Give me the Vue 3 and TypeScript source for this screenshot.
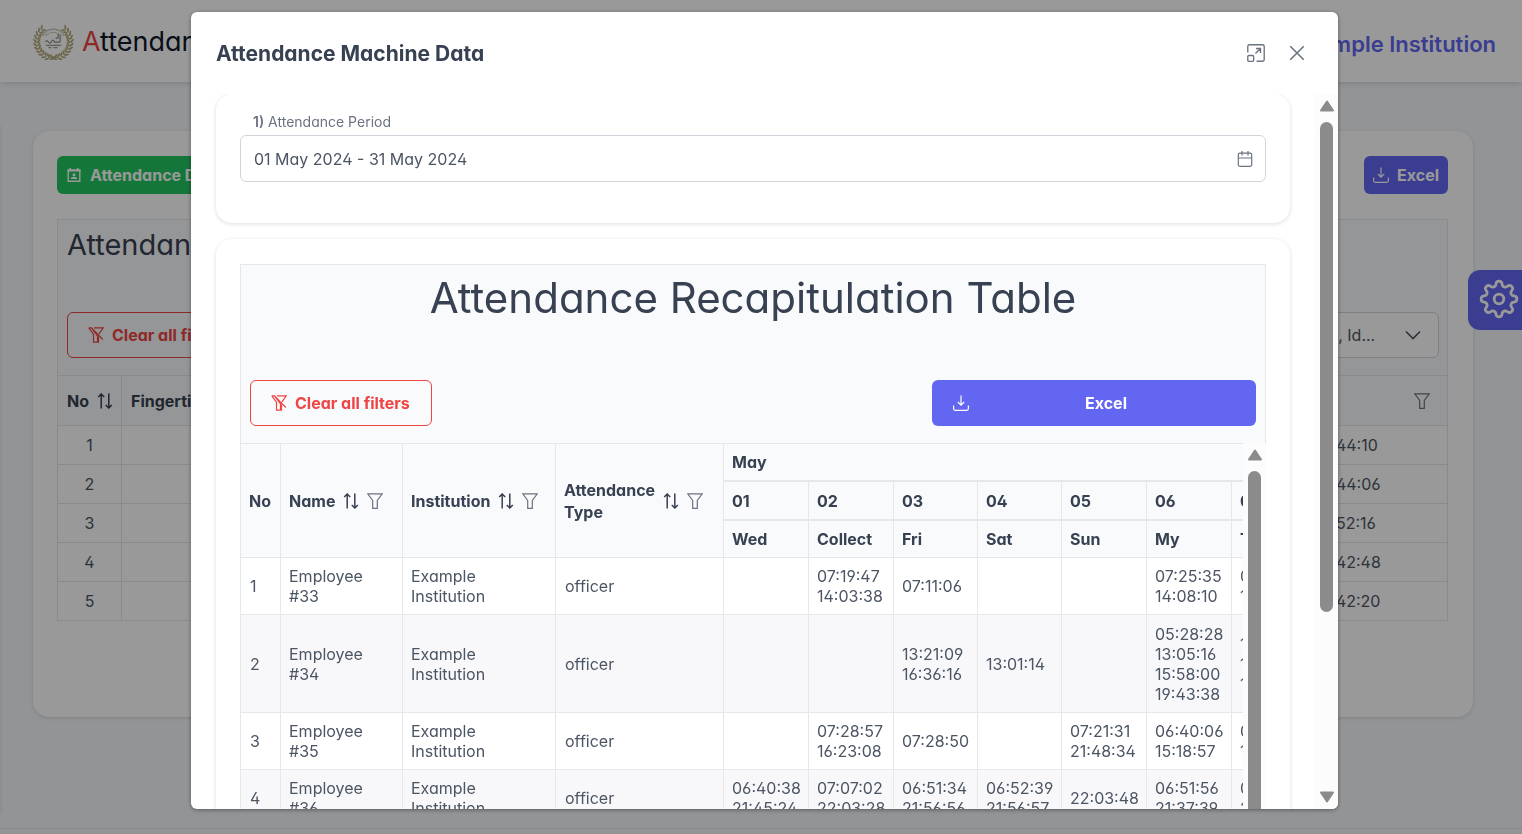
<script setup lang="ts">
import { ref } from 'vue'

interface Employee {
  no: number
  name: string
  days: string[][]
}

const period = ref('01 May 2024 - 31 May 2024')

const dates = ['01', '02', '03', '04', '05', '06', '07']
const weekdays = ['Wed', 'Collect', 'Fri', 'Sat', 'Sun', 'My', 'Tue']

const employees: Employee[] = [
  { no: 1, name: 'Employee #33', days: [[], ['07:19:47', '14:03:38'], ['07:11:06'], [], [], ['07:25:35', '14:08:10'], ['07:20:11', '14:05:32']] },
  { no: 2, name: 'Employee #34', days: [[], [], ['13:21:09', '16:36:16'], ['13:01:14'], [], ['05:28:28', '13:05:16', '15:58:00', '19:43:38'], ['13:02:40', '16:01:12', '19:40:05']] },
  { no: 3, name: 'Employee #35', days: [[], ['07:28:57', '16:23:08'], ['07:28:50'], [], ['07:21:31', '21:48:34'], ['06:40:06', '15:18:57'], ['06:45:10', '15:20:44']] },
  { no: 4, name: 'Employee #36', days: [['06:40:38', '21:45:24'], ['07:07:02', '22:03:28'], ['06:51:34', '21:56:56'], ['06:52:39', '21:56:57'], ['22:03:48'], ['06:51:56', '21:37:39'], ['06:50:20', '21:41:18']] },
]

const scans = [
  { no: 1, time: '07:44:10' },
  { no: 2, time: '07:44:06' },
  { no: 3, time: '07:52:16' },
  { no: 4, time: '07:42:48' },
  { no: 5, time: '07:42:20' },
]

function gearOutline(): string {
  const points: string[] = []
  for (let i = 0; i < 192; i++) {
    const a = (i / 192) * Math.PI * 2
    const wave = Math.tanh(1.8 * Math.cos(8 * a)) / Math.tanh(1.8)
    const r = 15.5 + 2.3 * wave
    points.push(`${(20 + r * Math.cos(a)).toFixed(2)},${(20 + r * Math.sin(a)).toFixed(2)}`)
  }
  return points.join(' ')
}
const gear = gearOutline()

interface Leaf {
  x: number
  y: number
  turn: number
}

function wreath(): Leaf[] {
  const leaves: Leaf[] = []
  for (let i = 0; i < 12; i++) {
    const deg = 98 + i * 12
    const a = (deg * Math.PI) / 180
    for (const [r, tilt] of [[18, 50], [14.5, 130]]) {
      const x = r * Math.cos(a)
      const y = r * Math.sin(a)
      leaves.push({ x: 20 + x, y: 18 + y, turn: deg + tilt })
      leaves.push({ x: 20 - x, y: 18 + y, turn: 180 - deg - tilt })
    }
  }
  return leaves
}
const leaves = wreath()
</script>

<template>
  <div class="app">
    <header class="topbar">
      <a class="brand" href="#">
        <svg class="brand-logo" viewBox="0 0 40 36" aria-hidden="true">
          <ellipse v-for="(l, i) in leaves" :key="i" cx="0" cy="0" rx="2.6" ry="0.9" fill="#a49a62" :transform="`translate(${l.x} ${l.y}) rotate(${l.turn})`" />
          <path d="M9.500 12.500Q13 6 20 6t10.500 6.500" fill="none" stroke="#b9b7a6" stroke-width="1.200" />
          <path d="M12 12.500q8-7 16 0" fill="none" stroke="#c5c3b4" stroke-width="1" />
          <path d="M12 18.500q1.500-2.500 3 0t3-.5 3 .5h5.500M22 15l2.500-.5V10.500M26.500 12v6.500" fill="none" stroke="#7d7f78" stroke-width="1.200" />
          <path d="M12.500 21.800h15M15 24h3M20 24h4" fill="none" stroke="#8f8f7c" stroke-width="1.200" />
          <path d="M16.500 33.500q3.500 1.500 7 0M20 32.500v3" fill="none" stroke="#a49a62" stroke-width="1.200" />
        </svg>
        <span class="brand-name"><span class="brand-initial">A</span>ttendance</span>
      </a>
      <span class="institution">Example Institution</span>
    </header>

    <aside class="side-edge" aria-hidden="true"></aside>

    <main class="page">
      <section class="page-card">
        <div class="toolbar">
          <button type="button" class="btn green">
            <svg class="ic-sm" viewBox="0 0 16 16" aria-hidden="true">
              <path d="M2.200 3.200h11.600v11H2.200z" fill="none" stroke="currentColor" stroke-width="1.400" />
              <path d="M1.500 2.500h13v2h-13zM3.500 1H5v3H3.500zM11 1h1.500v3H11z" fill="currentColor" />
              <circle cx="8" cy="7.700" r="1.500" fill="currentColor" />
              <path d="M4.800 12q0-2.200 3.200-2.200t3.200 2.200z" fill="currentColor" />
            </svg>
            <span>Attendance Data</span>
          </button>
          <button type="button" class="btn indigo">
            <svg class="ic" viewBox="0 0 16 16" aria-hidden="true"><path d="M8 .5v9.500M4.800 7L8 10.200 11.200 7M.6 10.500v3q0 1.800 1.800 1.800h11.200q1.800 0 1.800-1.800v-3" /></svg>
            <span>Excel</span>
          </button>
        </div>
        <div class="panel page-panel">
          <h2 class="page-title">Attendance Machine</h2>
          <div class="panel-actions">
            <button type="button" class="btn clear">
              <svg class="ic" viewBox="0 0 16 16" aria-hidden="true"><path d="M.8.8h2.700L14.800 12.500M.8.8L5.500 7.200v8h5V9.500M6 .8h9.200L11 6.800M3.500.8l6 8v6" /></svg>
              <span>Clear all filters</span>
            </button>
            <button type="button" class="picker" aria-label="Visible columns">
              <span>Name, Id...</span>
              <svg class="ic" viewBox="0 0 16 16" aria-hidden="true"><path d="M1 4.500L8 11.500l7-7" stroke-width="1.600" /></svg>
            </button>
          </div>
        </div>
        <table class="scan-table">
          <colgroup><col class="s-no" /><col /><col class="s-time" /></colgroup>
          <thead>
            <tr>
              <th>
                <span class="th-row">No
                  <svg class="ic" viewBox="0 0 16 16" aria-hidden="true"><path d="M4.200 15.500V1M1.200 4l3-3 3 3M11.800.5V15M8.800 12l3 3 3-3" stroke-width="1.500" /></svg>
                </span>
              </th>
              <th>Fingertip ID</th>
              <th>
                <svg class="ic scan-filter" viewBox="0 0 16 16" aria-hidden="true"><path d="M.7.8h14.600L10.300 7.500v7.800H5.700V7.500z" /></svg>
              </th>
            </tr>
          </thead>
          <tbody>
            <tr v-for="s in scans" :key="s.no">
              <td class="centre">{{ s.no }}</td>
              <td></td>
              <td>{{ s.time }}</td>
            </tr>
          </tbody>
        </table>
      </section>
    </main>
    <footer class="foot"></footer>

    <button type="button" class="config" aria-label="Settings">
      <svg viewBox="0 0 40 40" aria-hidden="true">
        <polygon :points="gear" fill="none" stroke="currentColor" stroke-width="2.800" stroke-linejoin="round" />
        <circle cx="20" cy="20" r="4.800" fill="none" stroke="currentColor" stroke-width="2.800" />
      </svg>
    </button>

    <div class="mask">
      <div class="dialog" role="dialog" aria-modal="true" aria-labelledby="dialog-title">
        <div class="dialog-head">
          <h1 id="dialog-title">Attendance Machine Data</h1>
          <button type="button" class="head-btn" aria-label="Maximize">
            <svg class="ic" viewBox="0 0 16 16" aria-hidden="true"><path d="M.7 7.500V2.200Q.7.700 2.200.7h11.600q1.500 0 1.500 1.500v11.600q0 1.500-1.500 1.500H8.500M7.500 8.500l4.500-4.500M8 4h4v4M1.700 10.200h3.200q1 0 1 1v3.200q0 1-1 1H1.700q-1 0-1-1v-3.200q0-1 1-1z" /></svg>
          </button>
          <button type="button" class="head-btn" aria-label="Close">
            <svg class="ic" viewBox="0 0 16 16" aria-hidden="true"><path d="M2 2l12 12M14 2L2 14" stroke-width="1.400" /></svg>
          </button>
        </div>
        <div class="dialog-body">
          <div class="cards">
            <section class="card">
              <label class="period-label" for="period"><b>1)</b> Attendance Period</label>
              <div class="period">
                <input id="period" v-model="period" type="text" />
                <svg class="ic" viewBox="0 0 16 16" aria-hidden="true"><path d="M2.800 2.200h10.400q1.500 0 1.500 1.500v10.100q0 1.500-1.500 1.500H2.800q-1.500 0-1.500-1.500V3.700q0-1.500 1.500-1.500zM1.300 7h13.400M5 0v4.500M11 0v4.500" /></svg>
              </div>
            </section>

            <section class="card grow">
              <div class="panel">
                <h2 class="recap-title">Attendance Recapitulation Table</h2>
                <div class="panel-actions">
                  <button type="button" class="btn clear">
                    <svg class="ic" viewBox="0 0 16 16" aria-hidden="true"><path d="M.8.8h2.700L14.800 12.500M.8.8L5.500 7.200v8h5V9.500M6 .8h9.200L11 6.800M3.500.8l6 8v6" /></svg>
                    <span>Clear all filters</span>
                  </button>
                  <button type="button" class="btn indigo wide">
                    <svg class="ic" viewBox="0 0 16 16" aria-hidden="true"><path d="M8 .5v9.500M4.800 7L8 10.200 11.200 7M.6 10.500v3q0 1.800 1.800 1.800h11.200q1.800 0 1.800-1.800v-3" /></svg>
                    <span>Excel</span>
                  </button>
                </div>
              </div>

              <div class="recap-scroll">
                <div class="recap-view">
                  <table class="recap">
                    <colgroup>
                      <col class="c-no" /><col class="c-name" /><col class="c-inst" /><col class="c-type" />
                      <col class="c-day" /><col class="c-day" /><col class="c-day-s" /><col class="c-day-s" />
                      <col class="c-day" /><col class="c-day" /><col class="c-day" />
                    </colgroup>
                    <thead>
                      <tr>
                        <th rowspan="3">No</th>
                        <th v-for="h in ['Name', 'Institution', 'Attendance Type']" :key="h" rowspan="3">
                          <span class="th-row">
                            <span class="th-text">{{ h }}</span>
                            <svg class="ic" viewBox="0 0 16 16" aria-hidden="true"><path d="M4.200 15.500V1M1.200 4l3-3 3 3M11.800.5V15M8.800 12l3 3 3-3" stroke-width="1.500" /></svg>
                            <svg class="ic funnel" viewBox="0 0 16 16" aria-hidden="true"><path d="M.7.8h14.600L10.300 7.500v7.800H5.700V7.500z" /></svg>
                          </span>
                        </th>
                        <th :colspan="dates.length" class="month">May</th>
                      </tr>
                      <tr class="ruled">
                        <th v-for="d in dates" :key="d">{{ d }}</th>
                      </tr>
                      <tr class="ruled">
                        <th v-for="w in weekdays" :key="w">{{ w }}</th>
                      </tr>
                    </thead>
                    <tbody>
                      <tr v-for="e in employees" :key="e.no">
                        <td class="num">{{ e.no }}</td>
                        <td>{{ e.name }}</td>
                        <td>Example Institution</td>
                        <td class="num">officer</td>
                        <td v-for="(times, i) in e.days" :key="i">
                          <div v-for="t in times" :key="t">{{ t }}</div>
                        </td>
                      </tr>
                    </tbody>
                  </table>
                </div>
                <div class="bar" aria-hidden="true">
                  <svg class="arrow" viewBox="0 0 16 12"><path d="M8 1.500L14 10.500H2z" /></svg>
                  <span class="thumb"></span>
                </div>
              </div>
            </section>
          </div>
          <div class="bar outer" aria-hidden="true">
            <svg class="arrow" viewBox="0 0 16 12"><path d="M8 1.500L14 10.500H2z" /></svg>
            <span class="track"><span class="thumb"></span></span>
            <svg class="arrow" viewBox="0 0 16 12"><path d="M8 10.500L14 1.500H2z" /></svg>
          </div>
        </div>
      </div>
    </div>
  </div>
</template>

<style>
body {
  margin: 0;
  overflow: hidden;
}
</style>

<style scoped>
.app,
.app * {
  box-sizing: border-box;
}
.app {
  display: flex;
  flex-direction: column;
  height: 100vh;
  overflow: hidden;
  background: #f5f7fa;
  color: #4b5563;
  font-family: Inter, "Noto Sans", sans-serif;
  font-size: 16px;
  line-height: 20px;
  font-feature-settings: "cv02", "cv03", "cv04", "cv11";
}
h1,
h2 {
  margin: 0;
  color: #374151;
}
button,
input {
  font: inherit;
  font-feature-settings: inherit;
  color: inherit;
}
.ic {
  flex: none;
  width: 16px;
  height: 16px;
  fill: none;
  stroke: currentColor;
  stroke-width: 1.2;
}
.ic-sm {
  flex: none;
  width: 16px;
  height: 16px;
}

/* Top bar */
.topbar {
  flex: none;
  display: flex;
  align-items: center;
  justify-content: space-between;
  height: 82px;
  padding: 0 26px 0 33px;
  background: #ffffff;
  box-shadow: 0 1px 6px rgba(0, 0, 0, 0.16);
}
.brand {
  display: flex;
  align-items: center;
  gap: 8px;
  text-decoration: none;
  color: #0f172a;
}
.brand-logo {
  width: 41px;
  height: 37px;
  opacity: 0.85;
}
.brand-name {
  padding-top: 2px;
  font-size: 27px;
  line-height: 32px;
  font-weight: 400;
}
.brand-initial {
  color: #ef4444;
}
.institution {
  margin-top: 6px;
  font-size: 22px;
  line-height: 24px;
  font-weight: 600;
  color: #6366f1;
}
.side-edge {
  position: absolute;
  left: -20px;
  top: 126px;
  bottom: 20px;
  width: 20px;
  box-shadow: 0 0 4px rgba(0, 0, 0, 0.12);
}

/* Page behind the dialog */
.page {
  flex: 1;
  padding: 49px 49px 0 33px;
}
.page-card {
  height: 586px;
  padding: 25px 25px 25px 24px;
  border-radius: 16px;
  background: #ffffff;
  box-shadow: 0 1px 4px rgba(0, 0, 0, 0.14);
}
.toolbar {
  display: flex;
  justify-content: space-between;
  margin-bottom: 25px;
}
.btn {
  display: flex;
  align-items: center;
  gap: 8px;
  height: 38px;
  padding: 0 9px;
  border: 0;
  border-radius: 6px;
  color: #ffffff;
  font-weight: 700;
}
.green {
  background: #22c55e;
}
.indigo {
  background: #6366f1;
}
.clear {
  height: 46px;
  padding: 0 21px 0 20px;
  border: 1px solid #ef4444;
  background: transparent;
  color: #ef4444;
}
.wide {
  width: 324px;
  height: 46px;
  padding: 0 21px;
}
.wide span {
  flex: 1;
  text-align: center;
}
.panel {
  display: flex;
  flex-direction: column;
  justify-content: space-between;
  height: 179px;
  padding: 9px 9px 17px;
  border: 1px solid #e5e7eb;
  border-bottom: 0;
  background: #f9fafc;
}
.page-panel {
  height: 156px;
  padding-right: 8px;
}
.page-title {
  font-size: 29px;
  line-height: 32px;
  font-weight: 400;
}
.recap-title {
  font-size: 42px;
  line-height: 48px;
  font-weight: 400;
  text-align: center;
}
.panel-actions {
  display: flex;
  justify-content: space-between;
}
.picker {
  display: flex;
  align-items: center;
  justify-content: space-between;
  width: 160px;
  height: 46px;
  padding: 0 17px 0 13px;
  border: 1px solid #d1d5db;
  border-radius: 6px;
  background: #ffffff;
}
.scan-table {
  width: 100%;
  table-layout: fixed;
  border-collapse: collapse;
}
.s-no {
  width: 64px;
}
.s-time {
  width: 144px;
}
.scan-table th,
.scan-table td {
  height: 39px;
  padding: 0 9px;
  border: 1px solid #e5e7eb;
  text-align: left;
}
.scan-table th {
  height: 50px;
  background: #f9fafc;
  color: #374151;
  font-weight: 700;
}
.scan-table td.centre {
  text-align: center;
}
.scan-filter {
  display: block;
  margin-left: 101px;
  color: #6b7280;
}
.foot {
  flex: none;
  height: 6px;
  border-top: 1px solid #dfe3e8;
}
.config {
  position: absolute;
  top: 270px;
  right: 0;
  display: flex;
  align-items: center;
  width: 54px;
  height: 60px;
  padding: 0 0 2px 11px;
  border: 0;
  border-radius: 12px 0 0 12px;
  background: #6366f1;
  color: #ffffff;
  overflow: hidden;
}
.config svg {
  flex: none;
  width: 40px;
  height: 40px;
}

/* Dialog */
.mask {
  position: fixed;
  inset: 0;
  display: flex;
  padding: 12px 184px 25px 191px;
  background: rgba(0, 0, 0, 0.4);
}
.dialog {
  flex: 1;
  min-width: 0;
  display: flex;
  flex-direction: column;
  border-radius: 6px;
  background: #ffffff;
  box-shadow: 0 1px 4px rgba(0, 0, 0, 0.4);
  overflow: hidden;
}
.dialog-head {
  flex: none;
  display: flex;
  align-items: center;
  height: 82px;
  padding: 0 31px 0 25px;
}
.dialog-head h1 {
  flex: 1;
  padding-top: 2px;
  font-size: 21px;
  line-height: 28px;
  font-weight: 700;
}
.head-btn {
  margin-left: 21px;
  padding: 1px;
  border: 0;
  background: none;
  color: #6b7280;
}
.head-btn .ic {
  display: block;
  width: 18px;
  height: 18px;
}
.dialog-body {
  flex: 1;
  min-height: 0;
  display: flex;
  overflow: hidden;
}
.cards {
  flex: 1;
  min-width: 0;
  padding: 0 25px;
  overflow: hidden;
}
.card {
  height: 129px;
  margin-bottom: 16px;
  padding: 18px 24px 24px;
  border-radius: 16px;
  box-shadow: 0 1px 4px rgba(0, 0, 0, 0.14);
}
.card.grow {
  height: auto;
  padding-top: 25px;
}
.period-label {
  display: block;
  padding-left: 13px;
  margin-bottom: 3px;
  font-size: 14px;
  line-height: 20px;
  color: #6b7280;
}
.period-label b {
  font-weight: 600;
}
.period {
  display: flex;
  align-items: center;
  height: 47px;
  padding-right: 12px;
  border: 1px solid #d1d5db;
  border-radius: 6px;
}
.period input {
  flex: 1;
  min-width: 0;
  padding: 0 13px;
  border: 0;
  outline: 0;
  background: none;
}
.period .ic {
  color: #6b7280;
}
.recap-scroll {
  display: flex;
  height: 560px;
}
.recap-view {
  flex: 1;
  min-width: 0;
  overflow: hidden;
}
.recap {
  width: 1076px;
  table-layout: fixed;
  border-collapse: separate;
  border-spacing: 0;
}
.c-no {
  width: 40px;
}
.c-name {
  width: 122px;
}
.c-inst {
  width: 153px;
}
.c-type {
  width: 168px;
}
.c-day {
  width: 85px;
}
.c-day-s {
  width: 84px;
}
.recap th,
.recap td {
  padding: 8px;
  border-top: 1px solid #e5e7eb;
  border-left: 1px solid #e5e7eb;
  text-align: left;
}
.recap th {
  height: 38px;
  background: #f9fafc;
  color: #374151;
  font-weight: 700;
}
.recap th.month {
  height: 37px;
}
.recap .ruled th {
  height: 39px;
  border-top-width: 2px;
}
.recap .ruled + .ruled th {
  height: 38px;
}
.recap td.num {
  padding-left: 9px;
}
.recap tbody tr:nth-child(even) {
  height: 98px;
  background: #f8f8fa;
}
.recap tbody tr:last-child {
  height: auto;
}
.th-row {
  display: flex;
  align-items: center;
  gap: 8px;
  line-height: 22px;
}
.th-text {
  width: min-content;
}
.funnel {
  color: #6b7280;
}
.bar {
  flex: none;
  display: flex;
  flex-direction: column;
  align-items: center;
  width: 23px;
  padding-top: 6px;
  background: #fcfcfc;
}
.arrow {
  flex: none;
  width: 16px;
  height: 12px;
  fill: #8b8b8b;
  stroke: #8b8b8b;
  stroke-width: 2;
  stroke-linejoin: round;
}
.thumb {
  display: block;
  width: 13px;
  height: 490px;
  margin-top: 10px;
  border-radius: 7px;
  background: #8b8b8b;
}
.track {
  flex: 1;
}
.outer {
  padding-bottom: 6px;
}
</style>
